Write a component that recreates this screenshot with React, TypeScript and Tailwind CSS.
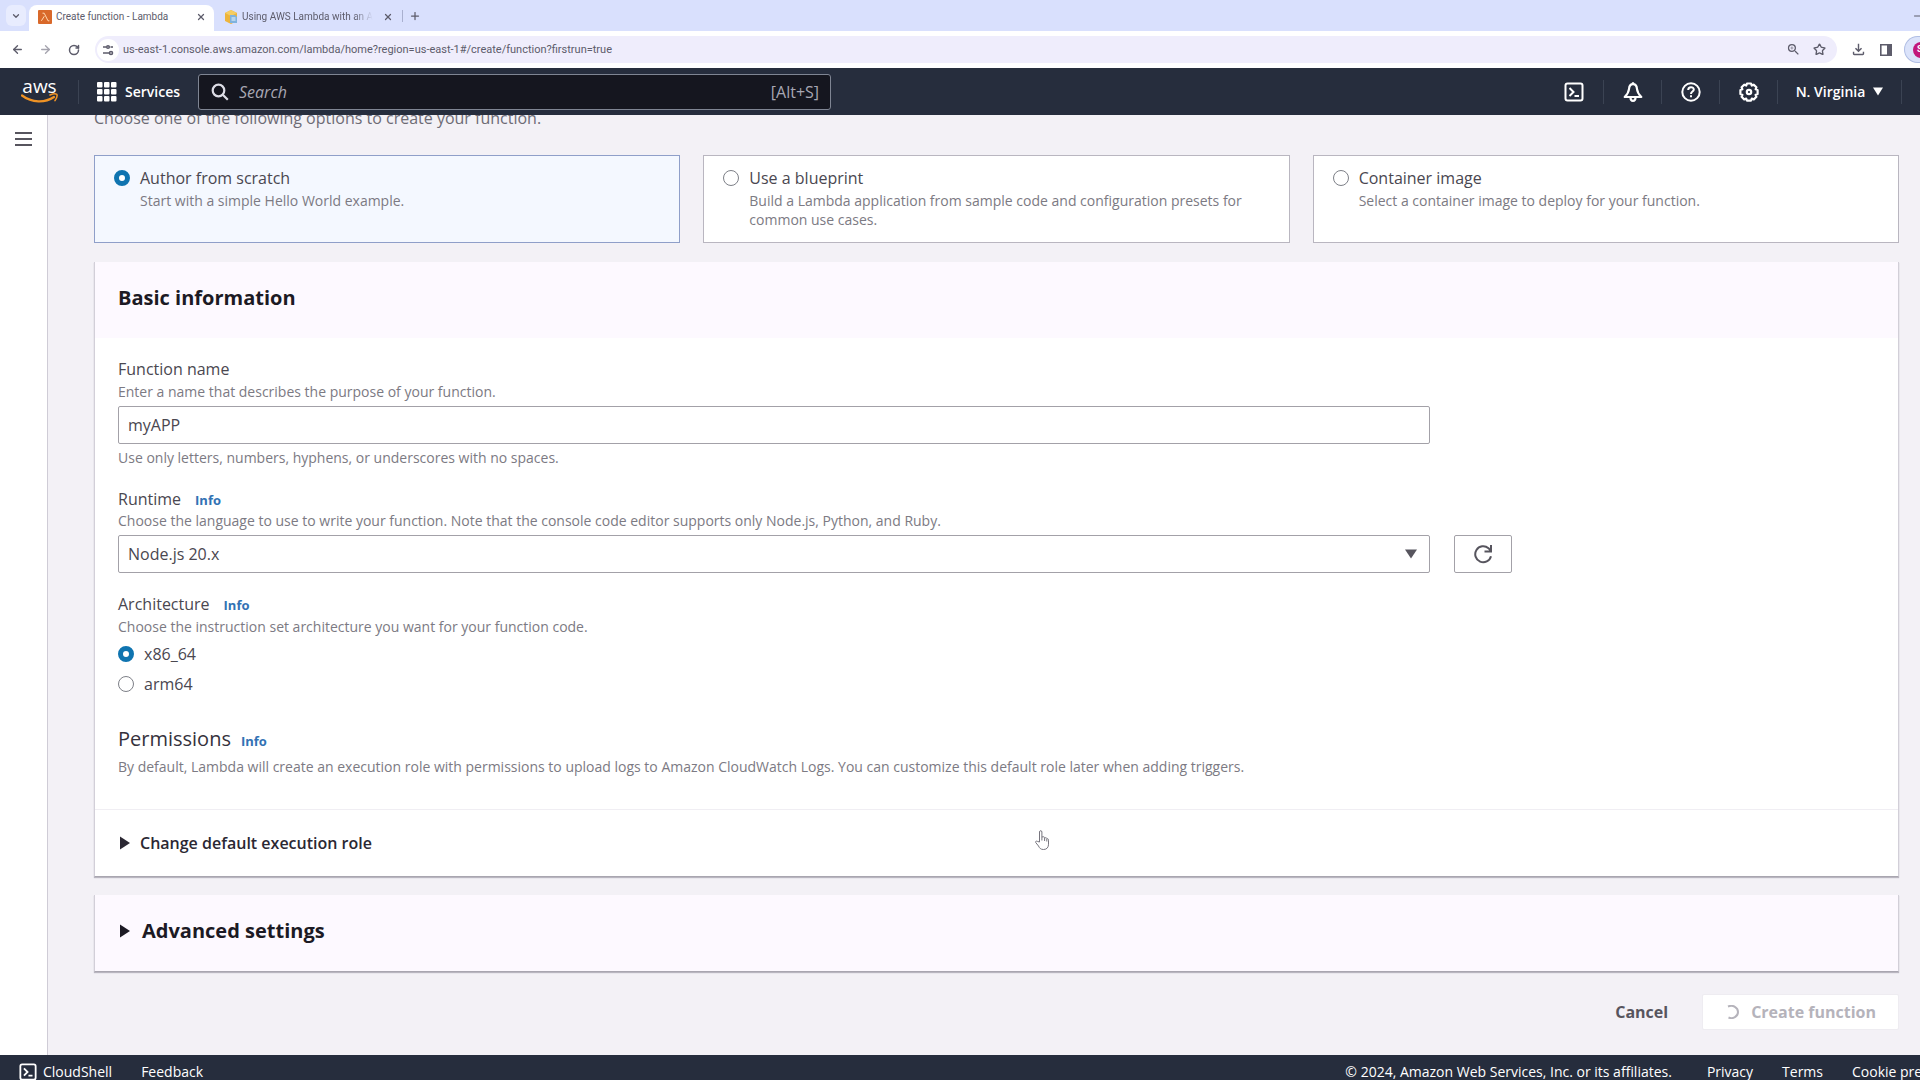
import React from 'react';
import { ArrowLeft, ArrowRight, ChevronDown, Minus, Plus, RotateCw, Star, X } from 'lucide-react';
import { MdOutlineFileDownload, MdOutlineZoomIn } from 'react-icons/md';

interface CreationOption {
  id: string;
  title: string;
  description: string;
}

const creationOptions: CreationOption[] = [
  { id: 'scratch', title: 'Author from scratch', description: 'Start with a simple Hello World example.' },
  {
    id: 'blueprint',
    title: 'Use a blueprint',
    description: 'Build a Lambda application from sample code and configuration presets for common use cases.',
  },
  { id: 'container', title: 'Container image', description: 'Select a container image to deploy for your function.' },
];

const radioClass =
  'appearance-none m-0 h-4 w-4 shrink-0 rounded-full border border-[#7d7f87] bg-white checked:border-[5px] checked:border-[#0f74b0]';
const hintClass = 'text-[14px] leading-5 text-[#7c7a83]';
const labelClass = 'text-[16px] leading-[22px] text-[#4a4750]';
const fieldClass =
  'h-[38px] rounded-[2px] border border-[#a3a1a8] bg-white px-[9px] text-[16px] text-[#4a4750] outline-none';

const InfoLink: React.FC = () => (
  <a href="#info" className="text-[13px] leading-[18px] font-bold text-[#3272b4]">
    Info
  </a>
);

const Caret: React.FC = () => (
  <svg viewBox="0 0 10 14" className="h-3.5 w-2.5" fill="currentColor" aria-hidden="true">
    <path d="M0 0.5 10 7 0 13.5z" />
  </svg>
);

const CloudShellIcon: React.FC<{ className?: string }> = ({ className }) => (
  <svg viewBox="0 0 20 20" className={className} fill="none" stroke="currentColor" strokeWidth="2" aria-hidden="true">
    <rect x="1.5" y="1.5" width="17" height="17" rx="2" />
    <path d="m5.5 6 4 4-4 4M10.5 14h4.5" />
  </svg>
);

const LambdaIcon: React.FC = () => (
  <svg viewBox="0 0 14 14" className="h-3.5 w-3.5 shrink-0" aria-hidden="true">
    <rect width="14" height="14" rx="1" fill="#d9692a" />
    <path d="M4.5 3.2h1.7l3.8 7.6h1.4M6.3 6.2 3.4 10.8" fill="none" stroke="#ffd9b0" strokeWidth="1" />
  </svg>
);

const DocsIcon: React.FC = () => (
  <svg viewBox="0 0 14 14" className="h-3.5 w-3.5 shrink-0" aria-hidden="true">
    <path d="m7 0 6 3v8l-6 3-6-3V3z" fill="#edb43b" />
    <path d="m7 0 6 3-6 3-6-3z" fill="#f5cd62" />
    <path d="M6 5h5l2 2v6H6z" fill="#7fb2dd" />
    <path d="M7.5 8h4M7.5 10h4" stroke="#eef6ff" />
  </svg>
);

const BrowserChrome: React.FC = () => (
  <header className="shrink-0 font-[Roboto,sans-serif] text-[#5d5c6b]">
    <div className="flex h-[31px] items-stretch bg-[#d9e0fd]">
      <button aria-label="Search tabs" className="my-[5px] ml-1.5 flex w-5 items-center justify-center rounded-md bg-[#e8ecfe]">
        <ChevronDown size={10} strokeWidth={3} />
      </button>
      <div className="mt-[5px] ml-[3px] flex w-[185px] items-center rounded-t-lg bg-white pr-2 pb-0.5 pl-[9px]">
        <LambdaIcon />
        <span className="ml-1 flex-1 text-[10px] leading-4 whitespace-nowrap">Create function - Lambda</span>
        <button aria-label="Close tab">
          <X size={10} strokeWidth={3} />
        </button>
      </div>
      <div className="mt-[5px] flex w-[188px] items-center pr-[9px] pb-0.5 pl-[10px]">
        <DocsIcon />
        <span className="ml-1 flex-1 overflow-hidden mask-r-from-85% text-[10px] leading-4 whitespace-nowrap">
          Using AWS Lambda with an Application
        </span>
        <button aria-label="Close tab" className="ml-2.5">
          <X size={10} strokeWidth={3} />
        </button>
      </div>
      <div className="mt-[10px] mb-[9px] border-l border-[#a9b0cf]" />
      <button aria-label="New tab" className="ml-1.5">
        <Plus size={12} strokeWidth={2.5} />
      </button>
      <div className="flex flex-1 items-center justify-end overflow-hidden">
        <Minus size={12} className="-mr-1" />
      </div>
    </div>
    <div className="flex h-[37px] items-center bg-white">
      <button aria-label="Back" className="ml-[11px]">
        <ArrowLeft size={13} strokeWidth={2.5} />
      </button>
      <button aria-label="Forward" className="ml-[15px] text-[#a5a4ae]">
        <ArrowRight size={13} strokeWidth={2.5} />
      </button>
      <button aria-label="Reload" className="ml-4">
        <RotateCw size={12} strokeWidth={3} />
      </button>
      <div className="ml-[15px] flex h-[27px] flex-1 items-center rounded-full bg-[#efedfc] pr-[11px]">
        <span className="ml-0.5 flex h-[22px] w-[22px] items-center justify-center rounded-full bg-white">
          <svg viewBox="0 0 12 12" className="h-3 w-3" fill="none" stroke="currentColor" strokeWidth="1.6" aria-hidden="true">
            <path d="M1 3h3M1 9h5M6 9h1" />
            <circle cx="6" cy="3" r="1.3" />
            <path d="M8.5 3H11" />
            <circle cx="9" cy="9" r="1.5" />
          </svg>
        </span>
        <input
          aria-label="Address"
          defaultValue="us-east-1.console.aws.amazon.com/lambda/home?region=us-east-1#/create/function?firstrun=true"
          className="ml-1 min-w-0 flex-1 bg-transparent text-[11px] leading-4 outline-none"
        />
        <MdOutlineZoomIn size={15} />
        <Star size={13} strokeWidth={2.5} className="ml-3" />
      </div>
      <MdOutlineFileDownload size={17} className="ml-[13px]" />
      <svg viewBox="0 0 12 12" className="ml-[13px] h-3 w-3" aria-hidden="true">
        <path d="M0.8 0.8h10.4v10.4H0.8z" fill="none" stroke="currentColor" strokeWidth="1.6" />
        <path d="M7 1h4v10H7z" fill="currentColor" />
      </svg>
      <div className="ml-3 flex h-[27px] w-4 items-center overflow-hidden rounded-l-full border border-r-0 border-[#b1bfe4] bg-[#dbe3fa] pl-2">
        <span className="flex h-4 w-4 shrink-0 items-center rounded-full bg-[#c2187a] pl-1 text-[9px] font-bold text-white">S</span>
      </div>
    </div>
  </header>
);

const navCell = 'flex h-6 items-center justify-center border-l border-[#3b4353]';

const ServicesNav: React.FC = () => (
  <nav className="flex h-[47px] shrink-0 items-center bg-[#262d3d] text-white">
    <a href="#home" aria-label="AWS home" className="ml-[21px] flex w-[37px] flex-col items-center">
      <span className="text-[19px] leading-[13px] font-medium">aws</span>
      <svg viewBox="0 0 37 11" className="h-[11px] w-[37px]" fill="none" stroke="#ef9325" aria-hidden="true">
        <path d="M1 2.5c10 7.5 23 7.5 32 1.5" strokeWidth="2.2" strokeLinecap="round" />
        <path d="M29 2c3-1.2 6-1.2 6.8-.6.6 1-.3 4-1.8 6.2" strokeWidth="1.6" strokeLinecap="round" />
      </svg>
    </a>
    <div className="ml-5 h-6 border-l border-[#3b4353]" />
    <button className="ml-[18px] flex items-center gap-2 text-[14px] font-semibold">
      <svg viewBox="0 0 20 20" className="h-5 w-5" fill="currentColor" aria-hidden="true">
        {[0, 7, 14].map((y) => [0, 7, 14].map((x) => <rect key={`${x}-${y}`} x={x} y={y} width="5.5" height="5.5" rx="1" />))}
      </svg>
      Services
    </button>
    <div className="ml-[18px] flex h-9 w-[633px] items-center rounded-[3px] border border-[#7f8593] bg-[#15161f] pr-[11px] pl-3 text-[#a8a7b3]">
      <svg viewBox="0 0 18 18" className="h-[18px] w-[18px] text-[#dddde6]" fill="none" stroke="currentColor" strokeWidth="2.2" aria-hidden="true">
        <circle cx="7.5" cy="7.5" r="5.8" />
        <path d="m11.8 11.8 5 5" />
      </svg>
      <input
        aria-label="Search services"
        placeholder="Search"
        className="ml-2.5 min-w-0 flex-1 bg-transparent text-[16px] italic outline-none placeholder:text-[#a8a7b3]"
      />
      <span className="text-[16px]">[Alt+S]</span>
    </div>
    <div className="ml-auto flex items-center">
      <button aria-label="CloudShell" className="flex h-6 w-[58px] items-center justify-center">
        <CloudShellIcon className="h-5 w-5" />
      </button>
      <button aria-label="Notifications" className={`${navCell} w-[58px]`}>
        <svg viewBox="0 0 20 20" className="h-5 w-5" fill="none" stroke="currentColor" strokeWidth="2.2" strokeLinejoin="round" aria-hidden="true">
          <path d="M10 2.2C7.4 2.2 6.2 4.2 6 7c-.3 3.5-1.800 5.5-4.3 8h16.6c-2.5-2.5-4-4.5-4.3-8-.2-2.8-1.4-4.8-4-4.8z" />
          <path d="M10 .3v2M7.5 15.5c0 4.500 5 4.500 5 0" />
        </svg>
      </button>
      <button aria-label="Help" className={`${navCell} w-[58px]`}>
        <svg viewBox="0 0 20 20" className="h-5 w-5" fill="none" stroke="currentColor" strokeWidth="2" aria-hidden="true">
          <circle cx="10" cy="10" r="8.7" />
          <path d="M7.2 8c0-3.8 5.6-3.5 5.6-.4 0 2-2.8 2-2.8 4.4M10 13.3v2" />
        </svg>
      </button>
      <button aria-label="Settings" className={`${navCell} w-[58px]`}>
        <svg viewBox="0 0 20 20" className="h-5 w-5" fill="none" stroke="currentColor" strokeWidth="2.2" strokeLinejoin="round" aria-hidden="true">
          <path d="M8 1.5h4l.8 2 2-.8 2.6 2.6-.8 2 2 .7v4l-2 .8.8 2-2.6 2.6-2-.8-.8 2H8l-.8-2-2 .8-2.6-2.6.8-2-2-.8V8l2-.7-.8-2 2.6-2.6 2 .8z" />
          <circle cx="10" cy="10" r="2.2" />
        </svg>
      </button>
      <button className={`${navCell} w-[124px] gap-2 text-[14px] font-semibold`}>
        N. Virginia
        <svg viewBox="0 0 10 9" className="h-[9px] w-2.5" fill="currentColor" aria-hidden="true">
          <path d="M0 0.5h10L5 8.5z" />
        </svg>
      </button>
      <div className="h-6 w-[19px] border-l border-[#3b4353]" />
    </div>
  </nav>
);

const OptionCard: React.FC<{ option: CreationOption; selected: boolean }> = ({ option, selected }) => (
  <label
    className={`flex items-start gap-2.5 border px-[19px] pt-[11px] pb-[9px] ${
      selected ? 'border-[#8f9fc9] bg-[#f4f8ff]' : 'border-[#b9b6c0] bg-white'
    }`}
  >
    <input type="radio" name="creation" defaultChecked={selected} className={`${radioClass} mt-[3px]`} />
    <span className="flex min-h-[66px] flex-col">
      <span className={labelClass}>{option.title}</span>
      <span className="mt-0.5 text-[14px] leading-[19px] text-[#7c7a83]">{option.description}</span>
    </span>
  </label>
);

const BasicInformation: React.FC = () => (
  <section className="mt-[19px] border border-t-0 border-[#d2cfd8] border-b-[#a9a6b0] bg-white shadow-[0_1px_1px_#b9b6c0]">
    <div className="bg-[#fdf9ff] px-[23px] pt-5 pb-6">
      <h2 className="text-[20px] leading-8 font-bold text-[#1c1a24]">Basic information</h2>
    </div>
    <div className="grid grid-cols-12 gap-x-6 px-[23px] pt-5 pb-8">
      <div className="col-span-9 flex flex-col">
        <label htmlFor="function-name" className={labelClass}>
          Function name
        </label>
        <p className={`${hintClass} mt-0.5`}>Enter a name that describes the purpose of your function.</p>
        <input id="function-name" defaultValue="myAPP" className={`${fieldClass} mt-1`} />
        <p className={`${hintClass} mt-1`}>Use only letters, numbers, hyphens, or underscores with no spaces.</p>
      </div>
      <div className="col-span-9 mt-5 flex flex-col">
        <div className="flex items-baseline gap-3.5">
          <label htmlFor="runtime" className={labelClass}>
            Runtime
          </label>
          <InfoLink />
        </div>
        <p className={`${hintClass} mt-px`}>
          Choose the language to use to write your function. Note that the console code editor supports only Node.js, Python, and Ruby.
        </p>
        <div className="relative mt-1 flex">
          <select id="runtime" className={`${fieldClass} flex-1 appearance-none`}>
            <option>Node.js 20.x</option>
          </select>
          <svg
            viewBox="0 0 12 10"
            className="pointer-events-none absolute top-3.5 right-[13px] h-2.5 w-3 text-[#57555e]"
            fill="currentColor"
            aria-hidden="true"
          >
            <path d="M0 0.5h12L6 9.5z" />
          </svg>
        </div>
      </div>
      <div className="col-span-3 flex items-end">
        <button
          aria-label="Refresh runtimes"
          className="flex h-[38px] w-[58px] items-center justify-center rounded-[2px] border border-[#a3a1a8] bg-white text-[#57555e]"
        >
          <svg viewBox="0 0 20 20" className="h-5 w-5" fill="none" stroke="currentColor" strokeWidth="2" aria-hidden="true">
            <path d="M18 12.2A8 8 0 1 1 15.5 4.2L18 7M18 1v6.5h-6.5" />
          </svg>
        </button>
      </div>
      <fieldset className="col-span-12 mt-5">
        <legend className="flex items-baseline gap-3.5">
          <span className={labelClass}>Architecture</span>
          <InfoLink />
        </legend>
        <p className={`${hintClass} mt-0.5`}>Choose the instruction set architecture you want for your function code.</p>
        <label className={`mt-1.5 flex items-center gap-2.5 ${labelClass}`}>
          <input type="radio" name="architecture" defaultChecked className={radioClass} />
          x86_64
        </label>
        <label className={`mt-2 flex items-center gap-2.5 ${labelClass}`}>
          <input type="radio" name="architecture" className={radioClass} />
          arm64
        </label>
      </fieldset>
      <div className="col-span-12 mt-[30px]">
        <div className="flex items-baseline gap-2.5">
          <h3 className="text-[20px] leading-7 text-[#35323c]">Permissions</h3>
          <InfoLink />
        </div>
        <p className={`${hintClass} mt-1`}>
          By default, Lambda will create an execution role with permissions to upload logs to Amazon CloudWatch Logs. You can customize this
          default role later when adding triggers.
        </p>
      </div>
    </div>
    <div className="border-t border-[#f0eef3] px-[25px] py-[22px]">
      <button className="flex items-center gap-2.5 text-[16px] leading-[22px] font-semibold text-[#2b2833]">
        <Caret />
        Change default execution role
      </button>
    </div>
  </section>
);

const CreateFunctionPage: React.FC = () => (
  <main className="flex min-w-0 flex-1 flex-col overflow-hidden pr-[21px] pl-[46px]">
    <p className="-mt-[9px] text-[16px] leading-6 text-[#6d6b75]">Choose one of the following options to create your function.</p>
    <div className="mt-[25px] grid grid-cols-3 gap-[23px]">
      {creationOptions.map((option, index) => (
        <OptionCard key={option.id} option={option} selected={index === 0} />
      ))}
    </div>
    <BasicInformation />
    <section className="mt-[18px] border border-t-0 border-[#d2cfd8] border-b-[#a9a6b0] bg-[#fdf9ff] px-[25px] pt-5 pb-6 shadow-[0_1px_1px_#b9b6c0]">
      <button className="flex items-center gap-3 text-[20px] leading-8 font-bold text-[#1c1a24]">
        <Caret />
        Advanced settings
      </button>
    </section>
    <div className="mt-[22px] flex items-center justify-end gap-[34px] text-[16px] font-bold">
      <button className="text-[#57555e]">Cancel</button>
      <button disabled className="flex h-9 items-center gap-3 rounded-[2px] border border-[#eeecf1] bg-white px-[22px] text-[#b5b3bb]">
        <svg viewBox="0 0 14 14" className="h-3.5 w-3.5" fill="none" stroke="currentColor" strokeWidth="2" aria-hidden="true">
          <path d="M3 1.5C8-.5 13 2.5 13 7s-5 7.5-9.5 5.5" />
        </svg>
        Create function
      </button>
    </div>
  </main>
);

const ConsoleFooter: React.FC = () => (
  <footer className="flex h-[25px] shrink-0 items-start overflow-hidden bg-[#262d3d] pt-1.5 pl-[19px] text-[14px] leading-[22px] font-medium whitespace-nowrap text-white">
    <button className="flex items-center gap-1.5">
      <CloudShellIcon className="h-[18px] w-[18px]" />
      CloudShell
    </button>
    <a href="#feedback" className="ml-[29px]">
      Feedback
    </a>
    <span className="ml-auto">© 2024, Amazon Web Services, Inc. or its affiliates.</span>
    <a href="#privacy" className="ml-[35px]">
      Privacy
    </a>
    <a href="#terms" className="ml-[29px]">
      Terms
    </a>
    <a href="#cookies" className="ml-[29px] w-[68px] overflow-hidden">
      Cookie preferences
    </a>
  </footer>
);

export default function App() {
  return (
    <div className="flex h-screen flex-col overflow-hidden bg-[#f3f1f6] font-['Open_Sans','Noto_Sans',sans-serif]">
      <BrowserChrome />
      <ServicesNav />
      <div className="flex min-h-0 flex-1">
        <aside className="w-12 shrink-0 border-r border-[#cfccd6] bg-white">
          <button aria-label="Open navigation" className="mt-4 ml-[15px] text-[#57555e]">
            <svg viewBox="0 0 17 16" className="h-4 w-[17px]" stroke="currentColor" strokeWidth="2" aria-hidden="true">
              <path d="M0 2h17M0 8h17M0 14h17" />
            </svg>
          </button>
        </aside>
        <CreateFunctionPage />
      </div>
      <ConsoleFooter />
      {/* pointer resting over the page */}
      <svg
        viewBox="0 0 14 20"
        className="pointer-events-none absolute top-[830px] left-[1035px] h-5 w-3.5"
        fill="white"
        stroke="#77757e"
        strokeLinejoin="round"
        aria-hidden="true"
      >
        <path d="M4.5 12V2c0-1.8 2.4-1.8 2.4 0v5c2-.6 2.6 0 2.8.8 1.5-.4 2 .2 2.2.9 1.2-.2 1.6.4 1.6 1.5v4c0 3-1.5 5.3-5 5.3-3 0-4-1.5-5-3.5L.7 12.5c-.5-1.4 1.2-2 2-1z" />
        <path d="M6.9 7v3.5M9.6 8v3M11.8 9v2.5" />
      </svg>
    </div>
  );
}
